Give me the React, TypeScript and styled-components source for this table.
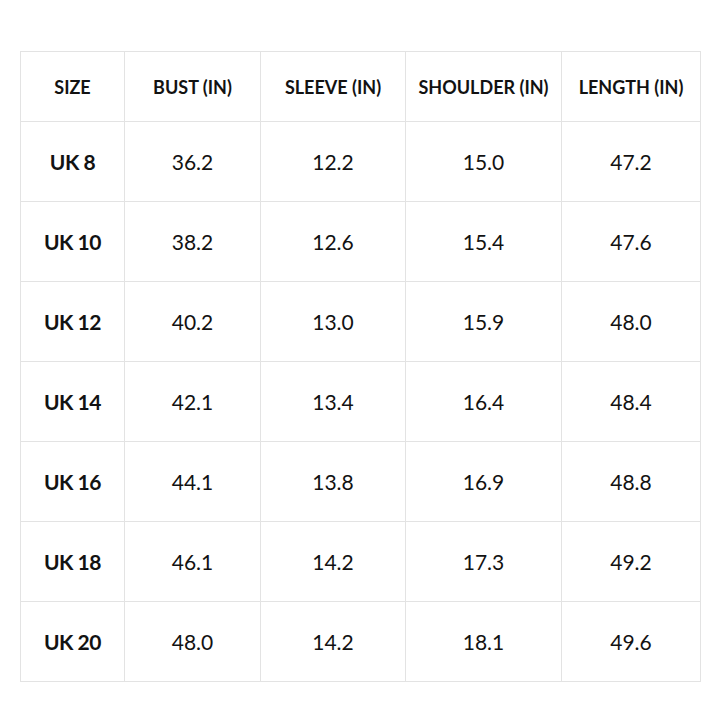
import React from 'react';
import styled, { createGlobalStyle } from 'styled-components';

const rows = [
  ['UK 8', '36.2', '12.2', '15.0', '47.2'],
  ['UK 10', '38.2', '12.6', '15.4', '47.6'],
  ['UK 12', '40.2', '13.0', '15.9', '48.0'],
  ['UK 14', '42.1', '13.4', '16.4', '48.4'],
  ['UK 16', '44.1', '13.8', '16.9', '48.8'],
  ['UK 18', '46.1', '14.2', '17.3', '49.2'],
  ['UK 20', '48.0', '14.2', '18.1', '49.6'],
];

const headers = ['SIZE', 'BUST (IN)', 'SLEEVE (IN)', 'SHOULDER (IN)', 'LENGTH (IN)'];
const widths = [104, 136, 145, 156, 139];

const App = () => {
  return (
    <Page>
      <GlobalStyle />
      <SizeTable>
        <colgroup>
          {widths.map((w, i) => (
            <col key={i} style={{ width: w }} />
          ))}
        </colgroup>
        <thead>
          <tr>
            {headers.map(h => (
              <HeadCell key={h}>{h}</HeadCell>
            ))}
          </tr>
        </thead>
        <tbody>
          {rows.map(r => (
            <tr key={r[0]}>
              {r.map((v, i) => (
                <Cell key={i} $bold={i === 0}>{v}</Cell>
              ))}
            </tr>
          ))}
        </tbody>
      </SizeTable>
    </Page>
  );
};

export default App;

const GlobalStyle = createGlobalStyle`
  body {
    margin: 0;
    background: #ffffff;
    font-family: Lato, "Open Sans", sans-serif;
    color: #121212;
  }
`;

const Page = styled.div`
  width: 720px;
  height: 720px;
  padding: 51px 0 0 20px;
  box-sizing: border-box;
`;

const SizeTable = styled.table`
  border-collapse: collapse;
  table-layout: fixed;
  width: 681px;
  border: 1px solid #e3e3e3;
`;

const HeadCell = styled.th`
  height: 69px;
  padding: 0;
  border: 1px solid #e3e3e3;
  font-size: 18px;
  font-weight: 700;
  text-align: center;
  white-space: nowrap;
`;

const Cell = styled.td<{ $bold?: boolean }>`
  height: 79px;
  padding: 0;
  border: 1px solid #e3e3e3;
  text-align: center;
  font-size: 21px;
  font-weight: ${p => (p.$bold ? 700 : 400)};
  letter-spacing: ${p => (p.$bold ? '-0.5px' : '0')};
`;
